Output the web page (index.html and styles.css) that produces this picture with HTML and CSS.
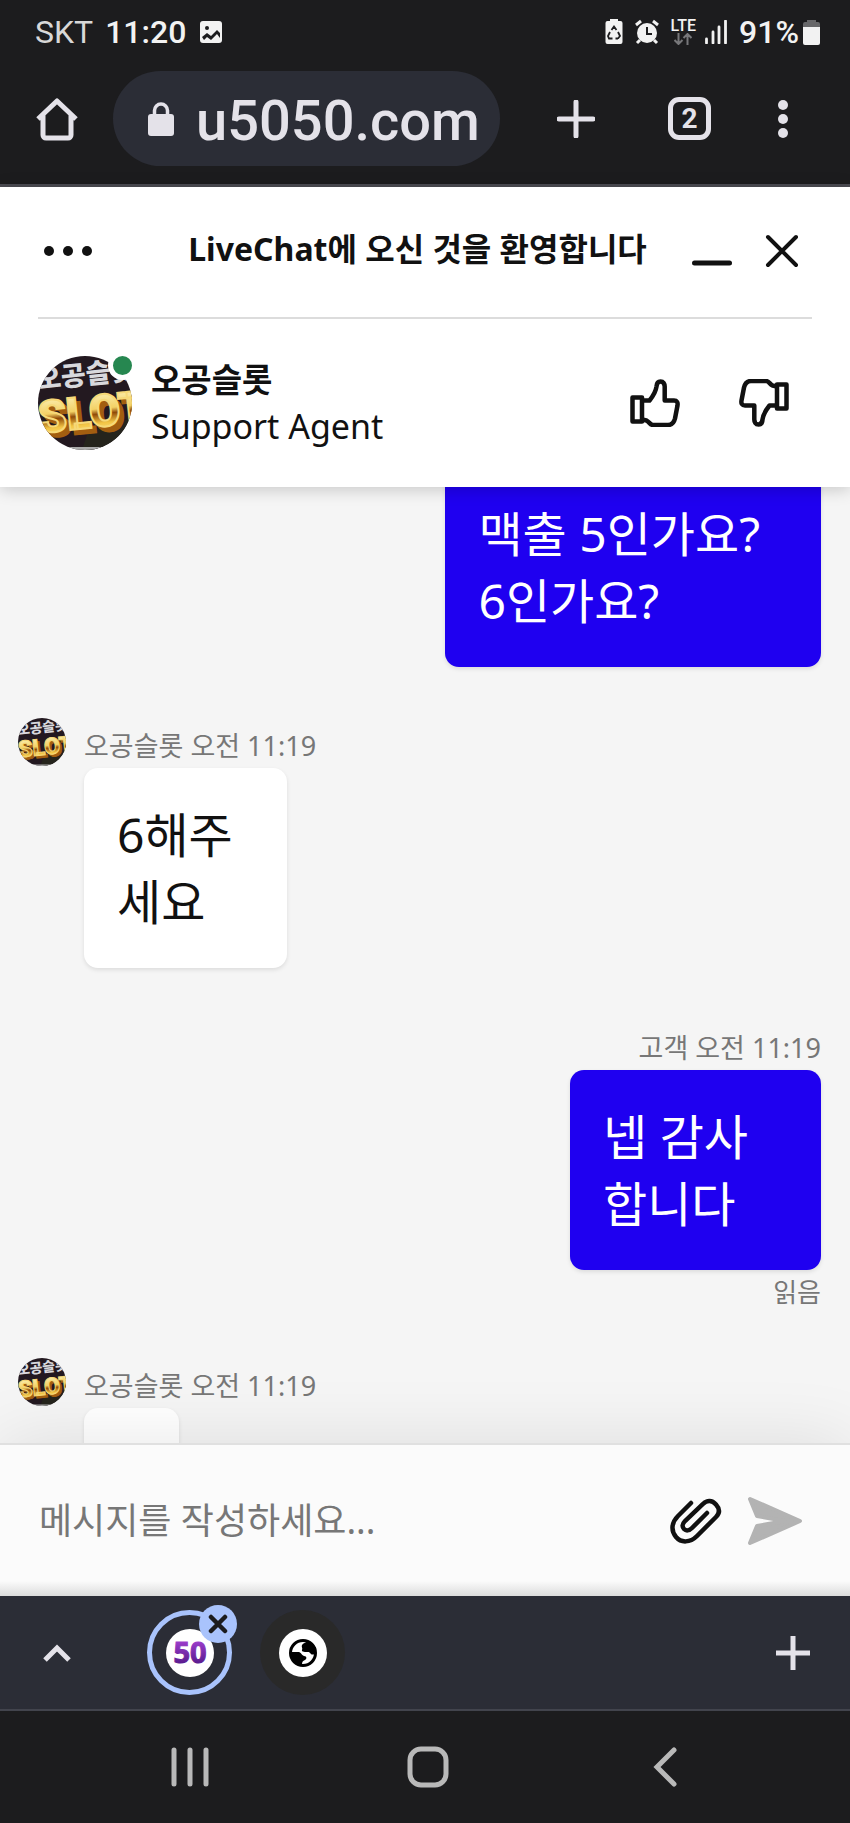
FILE: index.html
```html
<!DOCTYPE html>
<html lang="ko">
<head>
  <meta charset="UTF-8">
  <meta name="viewport" content="width=device-width, initial-scale=1">
  <title>LiveChat</title>
  <link rel="stylesheet" href="styles.css">
</head>
<body>
  <svg width="0" height="0" class="defs" aria-hidden="true">
    <defs>
      <linearGradient id="gold" x1="0" y1="0" x2="0" y2="1">
        <stop offset="0" stop-color="#fffbd0"/>
        <stop offset=".45" stop-color="#f3d165"/>
        <stop offset=".55" stop-color="#8f4a08"/>
        <stop offset=".72" stop-color="#f2c545"/>
        <stop offset="1" stop-color="#fff0a0"/>
      </linearGradient>
      <linearGradient id="purple" x1="0" y1="0" x2="0" y2="1">
        <stop offset=".2" stop-color="#a03fcf"/>
        <stop offset="1" stop-color="#43107a"/>
      </linearGradient>
      <clipPath id="round"><circle cx="47" cy="47" r="47"/></clipPath>
      <symbol id="slot" viewBox="0 0 94 94">
        <g clip-path="url(#round)">
          <rect width="94" height="94" fill="#231920"/>
          <path d="M50 76 94 62V94H44z" fill="#25241c"/>
          <text x="-1" y="33" transform="rotate(-6 2 30)" class="slot-top">오공슬롯</text>
          <text x="6" y="82" transform="rotate(-6 4 78)" class="slot-shade">SLOT</text>
          <text x="2" y="77" transform="rotate(-6 4 78)" class="slot-word">SLOT</text>
          <rect y="91" width="94" height="3" fill="#aaa"/>
        </g>
      </symbol>
    </defs>
  </svg>

  <div class="status">
    <span class="carrier">SKT</span>
    <span class="time">11:20</span>
    <svg class="photo" width="22" height="22" viewBox="0 0 22 22">
      <rect width="22" height="22" rx="3" fill="#f2f2f2"/>
      <circle cx="7" cy="7" r="2" fill="#1c1c1e"/>
      <path d="M2 16l5-4 4 3 6-6 3 3v5l-3-4-6 6-4-3-3 3z" fill="#1c1c1e"/>
    </svg>
    <div class="status-right">
      <svg width="18" height="26" viewBox="0 0 18 26">
        <path d="M5 0h8v2h2.500a2 2 0 0 1 2 2v19a2 2 0 0 1-2 2h-13a2 2 0 0 1-2-2V4a2 2 0 0 1 2-2H5z" fill="#f2f2f2"/>
        <path d="M6.500 11 9 7.500l2.500 3.500M13 13l2 4-2 2.500M10.500 19.500H13M7.500 19.500H4L3 17l2-4" fill="none" stroke="#1c1c1e" stroke-width="1.800"/>
      </svg>
      <svg class="alarm" width="24" height="26" viewBox="0 0 24 26">
        <circle cx="12" cy="14" r="10" fill="#f2f2f2"/>
        <path d="M1 6l5-4M18 2l5 4M5 21l-3 3M19 21l3 3" stroke="#f2f2f2" stroke-width="3"/>
        <path d="M12 8v7h5" fill="none" stroke="#1c1c1e" stroke-width="2"/>
      </svg>
      <div class="lte">
        <span>LTE</span>
        <svg width="18" height="12" viewBox="0 0 18 12"><path d="M4.500 0v11M.500 7l4 4 4-4M13.500 12V1M9.500 5l4-4 4 4" fill="none" stroke="#77777a" stroke-width="2"/></svg>
      </div>
      <svg class="signal" width="22" height="24" viewBox="0 0 22 24"><path d="M1.500 19v4M8 12v11M14 7v16M20.500 1v22" stroke="#f2f2f2" stroke-width="2.800" stroke-linecap="round"/></svg>
      <span class="percent">91%</span>
      <svg width="17" height="25" viewBox="0 0 17 25">
        <path d="M4 0h9v2h2a2 2 0 0 1 2 2v4H0V4a2 2 0 0 1 2-2h2z" fill="#68686a"/>
        <path d="M0 7h17v16a2 2 0 0 1-2 2H2a2 2 0 0 1-2-2z" fill="#f2f2f2"/>
      </svg>
    </div>
  </div>

  <header class="browser">
    <button class="icon-btn" aria-label="홈">
      <svg width="44" height="44" viewBox="0 0 44 44"><path d="M3 22 22 4l19 18M8 18v20a3 3 0 0 0 3 3h22a3 3 0 0 0 3-3V18" fill="none" stroke="#e4e2e9" stroke-width="5" stroke-linejoin="round"/></svg>
    </button>
    <a class="address" href="#">
      <svg width="26" height="34" viewBox="0 0 26 34"><rect y="12" width="26" height="22" rx="3" fill="#e4e2e9"/><path d="M6.500 13V8.500a6.500 6.500 0 0 1 13 0V13" fill="none" stroke="#e4e2e9" stroke-width="3.500"/></svg>
      <span>u5050.com</span>
    </a>
    <button class="icon-btn" aria-label="새 탭">
      <svg width="38" height="38" viewBox="0 0 38 38"><path d="M19 2v34M2 19h34" stroke="#e4e2e9" stroke-width="5" stroke-linecap="round"/></svg>
    </button>
    <button class="tabs-btn">2</button>
    <button class="icon-btn more" aria-label="메뉴">
      <svg width="10" height="40" viewBox="0 0 10 40" fill="#e4e2e9"><circle cx="5" cy="6" r="5"/><circle cx="5" cy="20" r="5"/><circle cx="5" cy="34" r="5"/></svg>
    </button>
  </header>

  <section class="chat-head">
    <div class="title-row">
      <button class="icon-btn" aria-label="옵션">
        <svg width="48" height="10" viewBox="0 0 48 10" fill="#111"><circle cx="5" cy="5" r="5"/><circle cx="24" cy="5" r="5"/><circle cx="43" cy="5" r="5"/></svg>
      </button>
      <h1>LiveChat에 오신 것을 환영합니다</h1>
      <button class="icon-btn" aria-label="최소화">
        <svg width="40" height="34" viewBox="0 0 40 34"><path d="M2.500 29h35" stroke="#111" stroke-width="5" stroke-linecap="round"/></svg>
      </button>
      <button class="icon-btn close" aria-label="닫기">
        <svg width="34" height="34" viewBox="0 0 34 34"><path d="M3 3l28 28M31 3 3 31" stroke="#111" stroke-width="4" stroke-linecap="round"/></svg>
      </button>
    </div>
    <div class="agent-row">
      <div class="agent-pic">
        <svg width="94" height="94"><use href="#slot"/></svg>
        <span class="online"></span>
      </div>
      <div class="agent-info">
        <h2>오공슬롯</h2>
        <p>Support Agent</p>
      </div>
      <button class="icon-btn" aria-label="좋아요">
        <svg width="50" height="48" viewBox="0 0 50 48"><g id="thumb" fill="none" stroke="#111" stroke-width="4.500" stroke-linejoin="round"><path d="M2.500 18.500h9.500v24H2.500z"/><path d="M12 21.500h7.500c4-5 6.500-10 7-14 .200-3 1.500-5 4-5 3 0 4.200 2.500 4.200 5v14H44c3 0 4 2 3.500 5l-2.500 13c-1 4-3.500 6.500-7 6.500H23c-3 0-3.500-3-6.500-4.500L12 40.500"/></g></svg>
      </button>
      <button class="icon-btn" aria-label="싫어요">
        <svg width="50" height="48" viewBox="0 0 50 48"><use href="#thumb" transform="rotate(180 25 24)"/></svg>
      </button>
    </div>
  </section>

  <main class="messages">
    <div class="msg mine first">
      <p class="bubble">맥출 5인가요?<br>6인가요?</p>
    </div>

    <div class="msg agent">
      <svg class="pic" width="48" height="48"><use href="#slot"/></svg>
      <div>
        <p class="meta">오공슬롯 오전 11:19</p>
        <p class="bubble">6해주<br>세요</p>
      </div>
    </div>

    <div class="msg mine">
      <p class="meta">고객 오전 11:19</p>
      <p class="bubble">넵 감사<br>합니다</p>
      <p class="read">읽음</p>
    </div>

    <div class="msg agent">
      <svg class="pic" width="48" height="48"><use href="#slot"/></svg>
      <div>
        <p class="meta">오공슬롯 오전 11:19</p>
        <p class="bubble short"></p>
      </div>
    </div>
  </main>

  <form class="composer">
    <input type="text" placeholder="메시지를 작성하세요..." aria-label="메시지">
    <button type="button" class="icon-btn" aria-label="파일 첨부">
      <svg width="52" height="46" viewBox="0 0 52 46"><path d="M21 5 8 18C1 25 1 33 6 39s14 6 21-1L46 19c4-4 4-8 0-12.500s-9-4.500-13-.500L15 23c-3 3-3 6-1 8s5 2 8-1L37 15" fill="none" stroke="#111" stroke-width="4.500" stroke-linecap="round"/></svg>
    </button>
    <button type="submit" class="icon-btn" aria-label="보내기">
      <svg width="56" height="50" viewBox="0 0 56 50"><path d="M3 3 53 25 3 47 10 30 38 25 10 20z" fill="#b3b3b3" stroke="#b3b3b3" stroke-width="4" stroke-linejoin="round"/></svg>
    </button>
  </form>

  <div class="tab-strip">
    <button class="icon-btn" aria-label="펼치기">
      <svg width="28" height="18" viewBox="0 0 28 18"><path d="M2 16 14 4l12 12" fill="none" stroke="#e4e2e9" stroke-width="5"/></svg>
    </button>
    <div class="tab active">
      <svg width="48" height="48" viewBox="0 0 48 48"><circle cx="24" cy="24" r="24" fill="#fff"/><text x="24" y="34" text-anchor="middle" class="logo50">50</text></svg>
      <button class="tab-close" aria-label="탭 닫기">
        <svg width="20" height="20" viewBox="0 0 20 20"><path d="M3 3l14 14M17 3 3 17" stroke="#1c1c1e" stroke-width="4.500" stroke-linecap="round"/></svg>
      </button>
    </div>
    <div class="tab">
      <svg width="48" height="48" viewBox="0 0 48 48"><circle cx="24" cy="24" r="24" fill="#fff"/><circle cx="24" cy="24" r="12.500" fill="none" stroke="#000" stroke-width="3"/><path d="M28 12c-1 2-4 2-5 4s1 3 0 5 4 2 6 2c3 0 2 4 7 2l1-6-4-5zM11 23h9c3 1 2 3 5 4 3 0 3 3 1 4-3 1-3 3-3 6l-7-3-4-6z" fill="#000"/></svg>
    </div>
    <button class="icon-btn add" aria-label="탭 추가">
      <svg width="34" height="34" viewBox="0 0 34 34"><path d="M17 0v34M0 17h34" stroke="#e4e2e9" stroke-width="5"/></svg>
    </button>
  </div>

  <nav class="system">
    <button class="icon-btn" aria-label="최근 앱">
      <svg width="38" height="40" viewBox="0 0 38 40"><path d="M3 3v34M19 3v34M35 3v34" stroke="#b9b9b9" stroke-width="5" stroke-linecap="round"/></svg>
    </button>
    <button class="icon-btn" aria-label="홈 화면">
      <svg width="42" height="42" viewBox="0 0 42 42"><rect x="3" y="3" width="36" height="36" rx="11" fill="none" stroke="#b9b9b9" stroke-width="5"/></svg>
    </button>
    <button class="icon-btn" aria-label="뒤로">
      <svg width="24" height="40" viewBox="0 0 24 40"><path d="M21 3 4 20l17 17" fill="none" stroke="#b9b9b9" stroke-width="5" stroke-linecap="round"/></svg>
    </button>
  </nav>
</body>
</html>
```
FILE: styles.css
```css
* { box-sizing: border-box; }
body {
  margin: 0;
  height: 100vh;
  display: flex;
  flex-direction: column;
  background: #f5f5f5;
  color: #111;
  font-family: "Noto Sans", "Noto Sans CJK KR", sans-serif;
}
h1, h2, p { margin: 0; }
svg { display: block; flex: none; }
.defs { position: absolute; }
.icon-btn { border: 0; padding: 0; background: none; display: flex; align-items: center; justify-content: center; flex: none; }

/* phone status bar */
.status {
  height: 64px;
  padding: 0 30px 0 35px;
  display: flex;
  align-items: center;
  background: #1c1c1e;
  color: #f2f2f2;
  font: 32px/36px Roboto, sans-serif;
}
.carrier { color: #d8d8d8; }
.time { margin-left: 12px; font-weight: 500; }
.photo { margin-left: 14px; }
.status-right { margin-left: auto; display: flex; align-items: center; }
.alarm { margin-left: 12px; }
.lte { margin-left: 12px; display: flex; flex-direction: column; align-items: center; font-size: 16px; line-height: 14px; font-weight: 500; }
.signal { margin-left: 9px; }
.percent { margin: 0 4px 0 12px; font-weight: 500; }

/* browser toolbar */
.browser {
  height: 123px;
  padding: 7px 62px 18px 35px;
  display: flex;
  align-items: center;
  background: #1c1c1e;
  border-bottom: 3px solid #4b4b52;
}
.address {
  flex: 1;
  height: 95px;
  margin: 0 57px 0 34px;
  padding-left: 35px;
  display: flex;
  align-items: center;
  gap: 22px;
  border-radius: 48px;
  background: #2b2d36;
  color: #e4e2e9;
  font: 500 56px/64px Roboto, sans-serif;
  text-decoration: none;
}
.address span { padding-top: 4px; }
.tabs-btn {
  width: 43px;
  height: 43px;
  margin: 0 67px 0 73px;
  padding: 0;
  border: 5px solid #e4e2e9;
  border-radius: 11px;
  background: none;
  color: #e4e2e9;
  font: bold 28px/32px Roboto, sans-serif;
}

/* chat header */
.chat-head {
  position: relative;
  z-index: 1;
  padding: 0 38px;
  background: #fff;
  box-shadow: 0 2px 16px rgba(0, 0, 0, 0.2);
}
.title-row {
  height: 132px;
  padding: 0 13px 2px 6px;
  display: flex;
  align-items: center;
  border-bottom: 2px solid #dcdcdc;
}
h1 { flex: 1; text-align: center; font-size: 32px; line-height: 44px; padding: 0 0 4px 51px; }
.close { margin-left: 33px; }
.agent-row { height: 168px; padding-right: 23px; display: flex; align-items: center; }
.agent-pic { position: relative; }
.online {
  position: absolute;
  top: -5px;
  right: -5px;
  width: 29px;
  height: 29px;
  border: 5px solid #fff;
  border-radius: 50%;
  background: #268750;
}
.agent-info { flex: 1; margin-left: 19px; }
.agent-info h2, .agent-info p { font-size: 33px; line-height: 46px; }
.agent-info p { font-size: 34px; }
.agent-row .icon-btn + .icon-btn { margin-left: 59px; }
.slot-top { font: 900 27px "Noto Sans CJK KR", sans-serif; fill: #d8d8dc; }
.slot-word, .slot-shade { font: 900 45px Roboto, sans-serif; fill: url(#gold); stroke: #f6d978; stroke-width: 2px; }
.slot-shade { fill: #a25e10; stroke: #a25e10; }

/* messages */
.messages { flex: 1; min-height: 0; overflow: hidden; padding: 0 29px 0 18px; }
.first { margin-top: -20px; }
.mine { display: flex; flex-direction: column; align-items: flex-end; }
.agent { display: flex; gap: 18px; margin-top: 44px; }
.first + .agent { margin-top: 51px; }
.agent + .mine { margin-top: 62px; }
.bubble {
  width: fit-content;
  padding: 33px 54px 33px 33px;
  border-radius: 14px;
  background: #fff;
  font-size: 48px;
  line-height: 67px;
  box-shadow: 0 2px 4px rgba(0, 0, 0, 0.1);
}
.mine .bubble { padding-right: 73px; background: #1f00f0; color: #fff; }
.mine.first .bubble { padding-right: 61px; }
.short { width: 95px; height: 200px; }
.meta, .read { font-size: 27px; line-height: 36px; color: #777; }
.meta { padding-bottom: 4px; }
.agent .meta { padding-top: 10px; }
.read { font-size: 26px; line-height: 44px; }

/* message input */
.composer {
  position: relative;
  height: 153px;
  padding: 0 47px 0 39px;
  display: flex;
  align-items: center;
  gap: 25px;
  border-top: 2px solid #e0e0e0;
  background: linear-gradient(#fbfbfb 136px, #dcdcdc);
  box-shadow: 0 0 70px rgba(0, 0, 0, 0.1);
}
.composer input { flex: 1; min-width: 0; border: 0; padding: 0; background: none; font: 36px/50px "Noto Sans", "Noto Sans CJK KR", sans-serif; }
.composer input::placeholder { color: #777; opacity: 1; }

/* tab group strip */
.tab-strip {
  height: 115px;
  padding: 0 40px 0 43px;
  position: relative;
  display: flex;
  align-items: center;
  background: #2b2d36;
  border-bottom: 2px solid #42444d;
}
.tab { position: relative; width: 85px; height: 85px; display: flex; align-items: center; justify-content: center; border-radius: 50%; background: #292929; }
.active { margin: 0 28px 0 76px; border: 5px solid #a9c3fc; background: none; }
.tab-close {
  position: absolute;
  top: -10px;
  right: -10px;
  width: 38px;
  height: 38px;
  padding: 9px;
  border: 0;
  border-radius: 50%;
  background: #a9c3fc;
}
.logo50 { font: bold 29px "Noto Sans", sans-serif; fill: url(#purple); stroke: url(#purple); }
.add { margin-left: auto; }

.system { height: 112px; padding: 0 155px 0 160px; display: flex; align-items: center; justify-content: space-between; background: #1c1c1e; }
.system .icon-btn { width: 60px; height: 60px; }
```
